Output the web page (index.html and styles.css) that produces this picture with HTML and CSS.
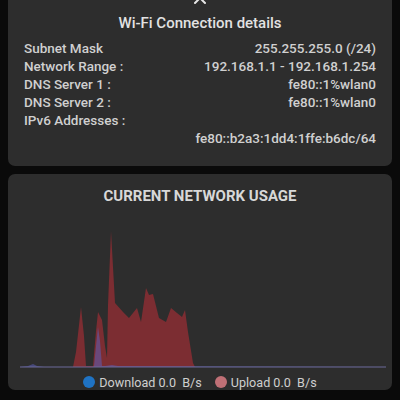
FILE: index.html
```html
<!DOCTYPE html>
<html lang="en">
<head>
  <meta charset="UTF-8" />
  <meta name="viewport" content="width=device-width, initial-scale=1.0"/>
  <title>Network Details</title>
  <link rel="stylesheet" href="styles.css">
</head>
<body>
  <div class="card details">
    <div class="close-peek">
      <svg width="14" height="14" viewBox="0 0 14 14">
        <path d="M2 2 L12 12 M12 2 L2 12" stroke="#e6e6e6" stroke-width="2" stroke-linecap="round"/>
      </svg>
    </div>
    <div class="title">Wi-Fi Connection details</div>
    <div class="row"><span>Subnet Mask</span><span>255.255.255.0 (/24)</span></div>
    <div class="row"><span>Network Range :</span><span>192.168.1.1 - 192.168.1.254</span></div>
    <div class="row"><span>DNS Server 1 :</span><span>fe80::1%wlan0</span></div>
    <div class="row"><span>DNS Server 2 :</span><span>fe80::1%wlan0</span></div>
    <div class="row"><span>IPv6 Addresses :</span></div>
    <div class="row value-only"><span>fe80::b2a3:1dd4:1ffe:b6dc/64</span></div>
  </div>

  <div class="card usage">
    <div class="usage-title">CURRENT NETWORK USAGE</div>
    <svg class="chart" viewBox="0 0 366 168" width="366" height="168">
      <!-- upload -->
      <path fill="#7c2d32" d="M0 161 L53 161 L56 146 L61 101 L64 130 L66 160 L73 160 L76 125 L78 106 L82 114 L85 140 L87 152 L88 99 L91 25 L95 97 L103 106 L109 112 L117 102 L121 116 L126 82 L129 89 L133 88 L139 112 L146 116 L151 102 L157 107 L162 111 L165 104 L168 126 L173 157 L175 161 L366 161 Z"/>
      <!-- download -->
      <path fill="#5b5fb8" fill-opacity="0.55" d="M0 161 L8 160 L13 158 L17 160 L24 161 L73 161 L74 160 L76 140 L78 121 L80 135 L82 160 L85 160 L92 159 L98 160 L366 161 Z"/>
      <line x1="0" y1="161" x2="366" y2="161" stroke="#6d6a9a" stroke-width="1.2"/>
    </svg>
    <div class="legend">
      <span class="dot download"></span><span class="legend-text">Download 0.0&nbsp; B/s</span>
      <span class="dot upload"></span><span class="legend-text">Upload 0.0&nbsp; B/s</span>
    </div>
  </div>
</body>
</html>
```

FILE: styles.css
```css
* {
  box-sizing: border-box;
}

body {
  margin: 0;
  padding: 0 8px;
  background: #0a0a0a;
  font-family: Roboto, "Liberation Sans", sans-serif;
  color: #d8d8d8;
  width: 400px;
  height: 400px;
  overflow: hidden;
}

.card {
  background: #2d2d2d;
  border-radius: 7px;
}

.details {
  height: 166px;
  border-radius: 0 0 7px 7px;
  padding: 0 16px;
}

.close-peek {
  height: 5px;
  overflow: hidden;
  display: flex;
  justify-content: center;
}

.close-peek svg {
  margin-top: -9px;
}

.title {
  text-align: center;
  font-size: 15px;
  font-weight: 500;
  line-height: 20px;
  margin-top: 8px;
  margin-bottom: 6px;
  color: #e2e2e2;
}

.row {
  display: flex;
  justify-content: space-between;
  font-size: 13.5px;
  font-weight: 500;
  line-height: 18px;
  color: #d0d0d0;
}

.value-only {
  justify-content: flex-end;
}

.usage {
  margin-top: 8px;
  height: 216px;
  padding: 12px 6px 0 12px;
}

.usage-title {
  text-align: center;
  font-size: 15px;
  font-weight: 700;
  line-height: 20px;
  color: #d8d8d8;
  margin-left: -6px;
}

.chart {
  display: block;
}

.legend {
  display: flex;
  justify-content: center;
  align-items: center;
  height: 16px;
  font-size: 12.6px;
  color: #cfcfcf;
  margin-left: -6px;
}

.dot {
  width: 12px;
  height: 12px;
  border-radius: 50%;
  margin-right: 4px;
}

.dot.download {
  background: #1f73c4;
}

.dot.upload {
  background: #c07076;
  margin-left: 13px;
}
```
